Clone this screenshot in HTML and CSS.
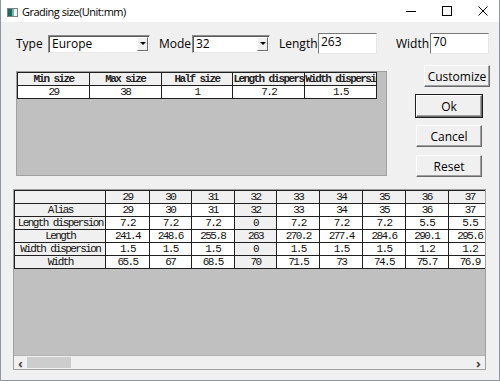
FILE: index.html
```html
<!DOCTYPE html>
<html lang="en">
<head>
    <meta charset="UTF-8">
    <title>Grading size(Unit:mm)</title>
    <link rel="stylesheet" href="styles.css">
</head>
<body>

<div class="window">
    <div class="titlebar">
        <svg class="app-icon" width="11" height="9" viewBox="0 0 11 9">
            <rect x="0.5" y="0.5" width="10" height="8" fill="#f4f6f6" stroke="#7c8584"/>
            <rect x="1" y="1" width="4" height="7" fill="#1d6a5e"/>
            <rect x="5" y="1" width="2" height="7" fill="#7fb3a8"/>
        </svg>
        <span class="title">Grading size(Unit:mm)</span>
        <div class="caption">
            <svg width="10" height="10" viewBox="0 0 10 10"><path d="M0 5.5H10" stroke="#000" stroke-width="1"/></svg>
            <svg width="10" height="10" viewBox="0 0 10 10"><rect x="0.5" y="0.5" width="9" height="9" fill="none" stroke="#000"/></svg>
            <svg width="10" height="10" viewBox="0 0 10 10"><path d="M0.5 0.5L9.5 9.5M9.5 0.5L0.5 9.5" stroke="#000" stroke-width="1"/></svg>
        </div>
    </div>

    <div class="client">
        <div class="params">
            <span class="lbl lbl-type">Type</span>
            <div class="combo combo-type"><span>Europe</span><i class="drop"></i></div>
            <span class="lbl lbl-mode">Mode</span>
            <div class="combo combo-mode"><span>32</span><i class="drop"></i></div>
            <span class="lbl lbl-length">Length</span>
            <div class="edit">263</div>
            <span class="lbl lbl-width">Width</span>
            <div class="edit">70</div>
        </div>

        <div class="middle">
            <div class="frame range-frame">
                <table class="grid range-grid">
                    <tr class="head">
                        <td>Min size</td>
                        <td>Max size</td>
                        <td>Half size</td>
                        <td class="clip">Length dispersion</td>
                        <td class="clip">Width dispersion</td>
                    </tr>
                    <tr>
                        <td>29</td>
                        <td>38</td>
                        <td>1</td>
                        <td>7.2</td>
                        <td>1.5</td>
                    </tr>
                </table>
            </div>

            <div class="buttons">
                <button class="btn btn-customize">Customize</button>
                <button class="btn btn-default">Ok</button>
                <button class="btn">Cancel</button>
                <button class="btn">Reset</button>
            </div>
        </div>

        <div class="frame size-frame">
            <div class="grid-view">
                <table class="grid size-grid">
                    <colgroup>
                        <col class="c-name">
                        <col class="c43"><col class="c42"><col class="c43"><col class="c42">
                        <col class="c43"><col class="c43"><col class="c42"><col class="c43"><col class="c43">
                    </colgroup>
                    <tr class="head">
                        <td></td><td>29</td><td>30</td><td>31</td><td>32</td><td>33</td><td>34</td><td>35</td><td>36</td><td>37</td>
                    </tr>
                    <tr>
                        <td class="fixed">Alias</td><td>29</td><td>30</td><td>31</td><td class="fixed">32</td><td>33</td><td>34</td><td>35</td><td>36</td><td>37</td>
                    </tr>
                    <tr>
                        <td class="fixed">Length dispersion</td><td>7.2</td><td>7.2</td><td>7.2</td><td class="fixed">0</td><td>7.2</td><td>7.2</td><td>7.2</td><td>5.5</td><td>5.5</td>
                    </tr>
                    <tr>
                        <td class="fixed">Length</td><td>241.4</td><td>248.6</td><td>255.8</td><td class="fixed">263</td><td>270.2</td><td>277.4</td><td>284.6</td><td>290.1</td><td>295.6</td>
                    </tr>
                    <tr>
                        <td class="fixed">Width dispersion</td><td>1.5</td><td>1.5</td><td>1.5</td><td class="fixed">0</td><td>1.5</td><td>1.5</td><td>1.5</td><td>1.2</td><td>1.2</td>
                    </tr>
                    <tr>
                        <td class="fixed">Width</td><td>65.5</td><td>67</td><td>68.5</td><td class="fixed">70</td><td>71.5</td><td>73</td><td>74.5</td><td>75.7</td><td>76.9</td>
                    </tr>
                </table>
            </div>
            <div class="hscroll">
                <span class="arrow">&lsaquo;</span>
                <div class="track"><div class="thumb"></div></div>
                <span class="arrow">&rsaquo;</span>
            </div>
        </div>
    </div>
</div>

</body>
</html>
```

FILE: styles.css
```css
html, body {
    margin: 0;
    padding: 0;
    overflow: hidden;
}
body {
    font-family: 'Open Sans', 'Noto Sans', sans-serif;
    font-size: 11px;
    color: #000;
    background-color: #f0f0f0;
}
.window {
    width: 500px;
    height: 381px;
    box-sizing: border-box;
    border: 1px solid #8b98a4;
    border-top: none;
    background-color: #f0f0f0;
}
.titlebar {
    height: 22px;
    background-color: #fff;
    display: flex;
    align-items: center;
}
.app-icon {
    margin-left: 6px;
    margin-top: 2px;
}
.title {
    margin-left: 4px;
    margin-top: 1px;
    font-size: 11px;
    letter-spacing: -0.5px;
}
.caption {
    margin-left: auto;
    display: flex;
    align-items: center;
    gap: 26px;
    margin-right: 11px;
}
.client {
    padding-top: 11px;
}
.params {
    display: flex;
    align-items: center;
    height: 21px;
    padding-left: 15px;
}
.lbl {
    font-size: 12px;
}
.lbl-type { width: 32px; }
.lbl-mode { width: 33px; margin-left: 9px; }
.lbl-length { width: 39px; margin-left: 9px; }
.lbl-width { width: 34px; margin-left: 19px; }
.combo {
    height: 18px;
    box-sizing: border-box;
    background-color: #fff;
    border: 1px solid;
    border-color: #8a8a8a #e8e8e8 #e8e8e8 #8a8a8a;
    box-shadow: inset 1px 1px 0 #5a5a5a;
    display: flex;
    align-items: center;
    padding-left: 3px;
    font-size: 12px;
}
.combo span {
    flex: 1;
}
.combo-type { width: 102px; }
.combo-mode { width: 78px; }
.drop {
    width: 11px;
    height: 14px;
    margin-right: 1px;
    box-sizing: border-box;
    background-color: #f0f0f0;
    border: 1px solid;
    border-color: #fff #6a6a6a #6a6a6a #fff;
    position: relative;
}
.drop::after {
    content: "";
    position: absolute;
    left: 2px;
    top: 4px;
    border-left: 3px solid transparent;
    border-right: 3px solid transparent;
    border-top: 3px solid #000;
}
.edit {
    width: 59px;
    height: 21px;
    box-sizing: border-box;
    background-color: #fff;
    border: 1px solid;
    border-color: #7a7a7a #e6e6e6 #e6e6e6 #7a7a7a;
    padding: 0 0 0 2px;
    font-size: 12px;
    line-height: 16px;
}
.middle {
    display: flex;
    margin-top: 11px;
}
.frame {
    box-sizing: border-box;
    border: 1px solid #a0a0a0;
    background-color: #c0c0c0;
}
.range-frame {
    width: 371px;
    height: 105px;
    margin-left: 15px;
    margin-top: 6px;
}
.buttons {
    display: flex;
    flex-direction: column;
    align-items: flex-start;
    gap: 8px;
    margin-left: 29px;
}
.btn {
    font-family: 'Open Sans', 'Noto Sans', sans-serif;
    font-size: 12px;
    width: 66px;
    height: 22px;
    padding: 0;
    background-color: #f0f0f0;
    border: 1px solid;
    border-color: #fff #6a6a6a #6a6a6a #fff;
    box-shadow: inset -1px -1px 0 #a0a0a0;
    color: #000;
}
.btn-customize {
    margin-left: 8px;
}
.btn-default {
    outline: 1px solid #1e1e1e;
    outline-offset: 0;
}
.grid {
    border-collapse: separate;
    border-spacing: 0;
    table-layout: fixed;
    font-family: 'Liberation Mono', 'DejaVu Sans Mono', monospace;
    font-size: 11px;
    letter-spacing: -1.6px;
    color: #111;
    border-top: 1px solid #202020;
    border-left: 1px solid #202020;
}
.grid td {
    box-sizing: border-box;
    height: 13px;
    padding: 0;
    border-right: 1px solid #202020;
    border-bottom: 1px solid #202020;
    text-align: center;
    white-space: nowrap;
    overflow: hidden;
    background-color: #fff;
    line-height: 12px;
}
.grid .head td,
.grid td.fixed {
    background-color: #f0f0f0;
}
.range-grid {
    width: 360px;
}
.range-grid .head td {
    font-weight: bold;
    color: #222;
}
.range-grid td.clip {
    text-align: left;
}
.size-frame {
    width: 473px;
    height: 181px;
    margin-left: 12px;
    margin-top: 12px;
    display: flex;
    flex-direction: column;
}
.grid-view {
    flex: 1;
    overflow: hidden;
}
.size-grid {
    width: 478px;
}
.c-name { width: 91px; }
.c43 { width: 43px; }
.c42 { width: 42px; }
.hscroll {
    height: 13px;
    background-color: #f0f0f0;
    border-top: 1px solid #b4b4b4;
    display: flex;
    align-items: center;
}
.arrow {
    width: 13px;
    text-align: center;
    font-size: 13px;
    font-weight: bold;
    line-height: 12px;
    color: #444;
}
.track {
    flex: 1;
    height: 11px;
}
.thumb {
    width: 44px;
    height: 11px;
    background-color: #cdcdcd;
}
```
